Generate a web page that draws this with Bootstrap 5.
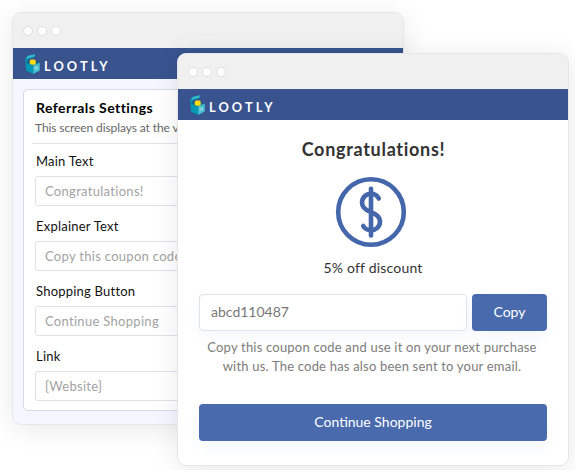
<!DOCTYPE html>
<html lang="en">
<head>
<meta charset="utf-8">
<meta name="viewport" content="width=device-width, initial-scale=1">
<title>Lootly referrals</title>
<link href="https://cdn.jsdelivr.net/npm/bootstrap@5.3.0/dist/css/bootstrap.min.css" rel="stylesheet">
<style>
body{font-family:Lato,"Liberation Sans",sans-serif;font-variant-ligatures:none;background:#fff;height:470px;overflow:hidden}
.stage{width:575px;height:470px}
.win{width:392px;height:413px;border:1px solid #e7e7e9;border-radius:9px;box-shadow:0 4px 28px rgba(0,0,0,.09)}
.win-back{left:12px;top:12px;background:#f4f7ff}
.win-front{left:177px;top:53px;background:#fff}
.chrome-bar{height:35px;background:#f0f0f0;padding-left:10px;gap:4px}
.dot{width:10px;height:10px;border-radius:50%;background:#fff;border:1px solid #dedede}
.brand-bar{height:31px;background:#38538e;padding-left:11px}
.brand-bar svg{width:17px;height:20px}
.brand-name{font-size:12.8px;font-weight:700;letter-spacing:3.1px;color:#fff;line-height:20px;margin:4px 0 0 3px}
.panel{margin:10px 10px 0;height:322px;border:1px solid #d6dbea;border-radius:5px;background:#fff}
.panel-head{margin:0 8px;padding:8px 4px 0;height:54px;border-bottom:1px solid #e1e3ec;white-space:nowrap}
.panel-title{font-size:14px;font-weight:700;line-height:20px;letter-spacing:.44px;color:#000;margin:0}
.panel-sub{font-size:12px;line-height:19px;letter-spacing:-.1px;color:#666;margin:0 0 0 -1px}
.fields{padding:7px 12px 0 11px}
.field{height:65px}
.field label{display:block;font-size:13px;line-height:20px;height:25px;letter-spacing:.22px;color:#111;padding-left:1px}
.fake-input{height:30px;border:1px solid #dfe1e8;border-radius:3px;padding-left:9px;font-size:13px;line-height:29px;letter-spacing:.3px;color:#a3a3a3;white-space:nowrap}
.front-body{padding:16px 21px 0}
.congrats{font-size:18px;font-weight:700;letter-spacing:.7px;line-height:26px;color:#333;margin:0 0 0 1px}
.coin{width:72px;height:72px;margin:14px 0 0 136px}
.discount{font-size:14px;line-height:20px;letter-spacing:.2px;color:#333;margin:10px 0 0}
.coupon{gap:5px;margin-top:16px}
.code{height:37px;border:1px solid #e1e2e5;border-radius:4px;padding-left:11px;font-size:14px;line-height:34px;color:#777;box-shadow:0 6px 14px rgba(70,100,170,.05)}
.btn-loot{height:37px;background:#496aad;color:#fff;border:0;border-radius:4px;font-size:14px;line-height:35px;padding:0 0 2px;box-shadow:0 6px 14px rgba(70,100,170,.06)}
.copy{width:75px}
.explain{font-size:13px;line-height:19px;letter-spacing:.2px;color:#7c7c7c;margin:7px 0 0 -2px;white-space:nowrap}
.cta{margin-top:28px}
</style>
</head>
<body>
<svg width="0" height="0" class="position-absolute">
<symbol id="chest" viewBox="0 0 17 20">
<path d="M1 4.8 3.8 2 11.2.2 10.4 3.2 4 5.4 2.6 9 1 8z" fill="#0b8fab"/>
<path d="M2 4 4.2 1.8 11.2.2 10.4 2.4 3.6 4.4z" fill="#35b9cc"/>
<path d="M1.5 8.7 8.4 6.8 15.8 8.8 9.2 11.2z" fill="#05728f"/>
<rect x="5.8" y="5.4" width="5.9" height="5.4" rx="1.6" fill="#fbdc0c"/>
<path d="M1.5 8.7 9.2 11.2V20L2.2 16.8z" fill="#0598b4"/>
<path d="M9.2 11.2 15.8 8.8V16.6L9.2 20z" fill="#46bfd0"/>
<circle cx="12.3" cy="14" r="1.3" fill="none" stroke="#c9edf1" stroke-width=".7"/>
</symbol>
</svg>
<main class="stage position-relative overflow-hidden">
<section class="win win-back position-absolute">
<div class="chrome-bar d-flex align-items-center rounded-top-3"><span class="dot"></span><span class="dot"></span><span class="dot"></span></div>
<div class="brand-bar d-flex align-items-center"><svg><use href="#chest"/></svg><span class="brand-name">LOOTLY</span></div>
<div class="panel">
<div class="panel-head"><h2 class="panel-title">Referrals Settings</h2><p class="panel-sub">This screen displays at the very end</p></div>
<div class="fields">
<div class="field"><label>Main Text</label><div class="fake-input">Congratulations!</div></div>
<div class="field"><label>Explainer Text</label><div class="fake-input">Copy this coupon code and use it</div></div>
<div class="field"><label>Shopping Button</label><div class="fake-input">Continue Shopping</div></div>
<div class="field"><label>Link</label><div class="fake-input">{Website}</div></div>
</div>
</div>
</section>
<section class="win win-front position-absolute">
<div class="chrome-bar d-flex align-items-center rounded-top-3"><span class="dot"></span><span class="dot"></span><span class="dot"></span></div>
<div class="brand-bar d-flex align-items-center"><svg><use href="#chest"/></svg><span class="brand-name">LOOTLY</span></div>
<div class="front-body text-center">
<h1 class="congrats">Congratulations!</h1>
<svg class="coin d-block" viewBox="0 0 72 72" fill="none" stroke="#4466aa" stroke-linecap="round" stroke-width="4.6">
<circle cx="36" cy="36" r="32.8"/>
<path d="M36 12.8V59.5M43.8 22.5C42.2 19.5 39.5 17.8 36 17.8C31 17.8 27 21.4 27 26.7C27 31.5 30.3 34 36 36.1C41.8 38.2 45 40.8 45 45.6C45 50.8 41 54.2 36 54.2C32.3 54.2 29.5 52.4 28.2 50"/>
</svg>
<p class="discount">5% off discount</p>
<div class="coupon d-flex"><div class="code flex-grow-1 text-start">abcd110487</div><button class="btn btn-loot copy">Copy</button></div>
<p class="explain">Copy this coupon code and use it on your next purchase<br>with us. The code has also been sent to your email.</p>
<button class="btn btn-loot cta w-100">Continue Shopping</button>
</div>
</section>
</main>
<script src="https://cdn.jsdelivr.net/npm/bootstrap@5.3.0/dist/js/bootstrap.bundle.min.js"></script>
</body>
</html>
